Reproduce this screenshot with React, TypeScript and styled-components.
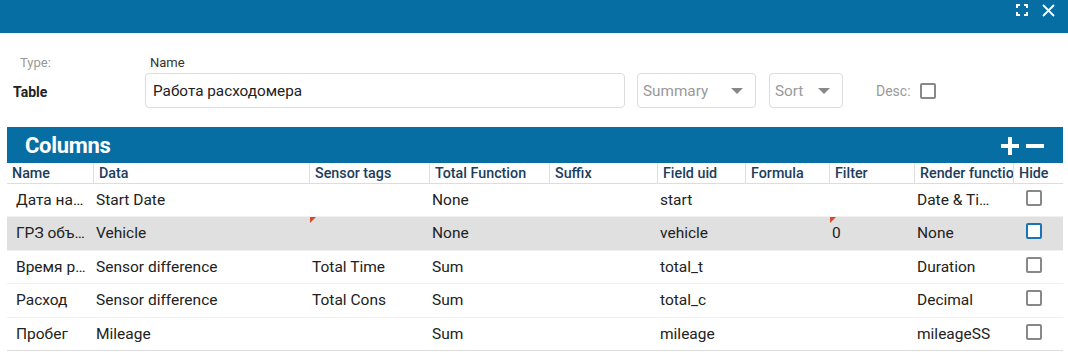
import React from 'react';
import styled, { createGlobalStyle } from 'styled-components';

const GlobalStyle = createGlobalStyle`
  body {
    margin: 0;
    background: #fff;
    font-family: Roboto, "Noto Sans", Arial, sans-serif;
    color: #222;
  }
`;

const BLUE = '#076ea3';

const TopBar = styled.div`
  height: 33px;
  background: ${BLUE};
  display: flex;
  justify-content: flex-end;
  align-items: flex-start;
  gap: 12px;
  padding: 3px 13px 0 0;
  box-sizing: border-box;
`;

const IconButton = styled.span`
  display: flex;
  width: 14px;
  height: 14px;
  align-items: center;
  justify-content: center;
`;

const Form = styled.div`
  display: flex;
  align-items: flex-end;
  padding: 22px 0 19px 13px;
`;

const Field = styled.div<{ $width: number; $mr?: number }>`
  display: flex;
  flex-direction: column;
  width: ${(p) => p.$width}px;
  margin-right: ${(p) => p.$mr ?? 0}px;
`;

const Label = styled.div<{ $muted?: boolean; $indent?: number }>`
  font-size: 13px;
  height: 18px;
  color: ${(p) => (p.$muted ? '#999' : '#333')};
  padding-left: ${(p) => p.$indent ?? 0}px;
`;

const Control = styled.div`
  height: 35px;
  display: flex;
  align-items: center;
  padding-top: 2px;
  box-sizing: border-box;
`;

const TypeValue = styled.div`
  font-size: 14px;
  font-weight: 700;
  color: #222;
`;

const TextInput = styled.div`
  width: 100%;
  height: 35px;
  border: 1px solid #dcdcdc;
  border-radius: 4px;
  box-sizing: border-box;
  display: flex;
  align-items: center;
  padding-left: 7px;
  font-size: 15.3px;
  color: #222;
`;

const Select = styled.div`
  width: 100%;
  height: 35px;
  border: 1px solid #dcdcdc;
  border-radius: 4px;
  box-sizing: border-box;
  display: flex;
  align-items: center;
  justify-content: space-between;
  padding: 0 12px 0 5px;
  font-size: 15.3px;
  color: #999;
`;

const Caret = styled.span`
  width: 0;
  height: 0;
  border-left: 6px solid transparent;
  border-right: 6px solid transparent;
  border-top: 6px solid #888;
`;

const DescBox = styled.div`
  display: flex;
  align-items: center;
  height: 35px;
  gap: 9px;
  font-size: 14px;
  color: #999;
`;

const Checkbox = styled.span<{ $active?: boolean }>`
  display: inline-block;
  width: 16px;
  height: 16px;
  box-sizing: border-box;
  border: 2px solid ${(p) => (p.$active ? '#1a73b5' : '#888')};
  border-radius: 2px;
  background: #fff;
`;

const Panel = styled.div`
  margin: 0 5px 0 7px;
`;

const PanelHeader = styled.div`
  height: 36px;
  background: ${BLUE};
  display: flex;
  justify-content: space-between;
  align-items: flex-end;
  padding: 0 19px 0 18px;
`;

const PanelTitle = styled.div`
  color: #fff;
  font-size: 22px;
  font-weight: 700;
  align-self: center;
  letter-spacing: -0.3px;
`;

const PanelActions = styled.div`
  display: flex;
  gap: 7px;
  padding-bottom: 8px;
`;

const COLS = '86px 216px 120px 120px 108px 88px 84px 85px 99px 50px';

const HeadRow = styled.div`
  display: grid;
  grid-template-columns: ${COLS};
  height: 20px;
  border-bottom: 1px solid #ddd;
`;

const HeadCell = styled.div`
  font-size: 14.3px;
  font-weight: 500;
  color: #1c3d5e;
  padding-left: 5px;
  line-height: 20px;
  white-space: nowrap;
  overflow: hidden;
  border-left: 1px solid #ddd;
  &:first-child {
    border-left: none;
  }
`;

const Row = styled.div<{ $selected?: boolean; $last?: boolean }>`
  display: grid;
  grid-template-columns: ${COLS};
  height: 33.4px;
  box-sizing: border-box;
  background: ${(p) => (p.$selected ? '#e0e0e0' : '#fff')};
  border-bottom: 1px solid ${(p) => (p.$last ? '#ddd' : '#f0f0f0')};
`;

const Cell = styled.div<{ $padRight?: number }>`
  position: relative;
  font-size: 15.5px;
  color: #222;
  padding: 0 ${(p) => p.$padRight ?? 3}px 0 3px;
  line-height: 32px;
  white-space: nowrap;
  overflow: hidden;
  text-overflow: ellipsis;
  &:first-child {
    padding-left: 9px;
  }
`;

const CheckCell = styled.div`
  display: flex;
  align-items: flex-start;
  padding: 6px 0 0 13px;
`;

const DirtyMark = styled.span`
  position: absolute;
  top: 0;
  left: 1px;
  width: 0;
  height: 0;
  border-top: 6px solid #d9472b;
  border-right: 6px solid transparent;
`;

type Column = {
  name: string;
  data: string;
  tags: string;
  total: string;
  suffix: string;
  uid: string;
  formula: string;
  filter: string;
  render: string;
  dirty?: boolean;
};

const columns: Column[] = [
  { name: 'Дата начала', data: 'Start Date', tags: '', total: 'None', suffix: '', uid: 'start', formula: '', filter: '', render: 'Date & Time' },
  { name: 'ГРЗ объекта', data: 'Vehicle', tags: '', total: 'None', suffix: '', uid: 'vehicle', formula: '', filter: '0', render: 'None', dirty: true },
  { name: 'Время работы', data: 'Sensor difference', tags: 'Total Time', total: 'Sum', suffix: '', uid: 'total_t', formula: '', filter: '', render: 'Duration' },
  { name: 'Расход', data: 'Sensor difference', tags: 'Total Cons', total: 'Sum', suffix: '', uid: 'total_c', formula: '', filter: '', render: 'Decimal' },
  { name: 'Пробег', data: 'Mileage', tags: '', total: 'Sum', suffix: '', uid: 'mileage', formula: '', filter: '', render: 'mileageSS' },
];

const headers = ['Name', 'Data', 'Sensor tags', 'Total Function', 'Suffix', 'Field uid', 'Formula', 'Filter', 'Render function', 'Hide'];

export default function App() {
  return (
    <>
      <GlobalStyle />
      <TopBar>
        <IconButton>
          <svg width="12" height="12" viewBox="0 0 12 12" fill="none" stroke="#fff" strokeWidth="2">
            <path d="M1 4V1h3M8 1h3v3M11 8v3H8M4 11H1V8" />
          </svg>
        </IconButton>
        <IconButton>
          <svg width="13" height="13" viewBox="0 0 13 13" stroke="#fff" strokeWidth="1.8">
            <path d="M1 1l11 11M12 1L1 12" />
          </svg>
        </IconButton>
      </TopBar>
      <Form>
        <Field $width={132}>
          <Label $muted $indent={7}>Type:</Label>
          <Control>
            <TypeValue>Table</TypeValue>
          </Control>
        </Field>
        <Field $width={480} $mr={12}>
          <Label $indent={5}>Name</Label>
          <TextInput>Работа расходомера</TextInput>
        </Field>
        <Field $width={119} $mr={13}>
          <Select>
            Summary
            <Caret />
          </Select>
        </Field>
        <Field $width={74} $mr={33}>
          <Select>
            Sort
            <Caret />
          </Select>
        </Field>
        <Field $width={80}>
          <DescBox>
            Desc:
            <Checkbox />
          </DescBox>
        </Field>
      </Form>
      <Panel>
        <PanelHeader>
          <PanelTitle>Columns</PanelTitle>
          <PanelActions>
            <svg width="18" height="18" viewBox="0 0 18 18" fill="#fff">
              <rect x="7" y="0" width="4" height="18" />
              <rect x="0" y="7" width="18" height="4" />
            </svg>
            <svg width="18" height="18" viewBox="0 0 18 18" fill="#fff">
              <rect x="0" y="7" width="18" height="4" />
            </svg>
          </PanelActions>
        </PanelHeader>
        <HeadRow>
          {headers.map((h) => (
            <HeadCell key={h}>{h}</HeadCell>
          ))}
        </HeadRow>
        {columns.map((c, i) => (
          <Row key={c.uid} $selected={c.dirty} $last={i === columns.length - 1}>
            <Cell>{c.name}</Cell>
            <Cell>{c.data}</Cell>
            <Cell>
              {c.dirty && <DirtyMark />}
              {c.tags}
            </Cell>
            <Cell>{c.total}</Cell>
            <Cell>{c.suffix}</Cell>
            <Cell>{c.uid}</Cell>
            <Cell>{c.formula}</Cell>
            <Cell>
              {c.dirty && <DirtyMark />}
              {c.filter}
            </Cell>
            <Cell $padRight={20}>{c.render}</Cell>
            <CheckCell>
              <Checkbox $active={c.dirty} />
            </CheckCell>
          </Row>
        ))}
      </Panel>
    </>
  );
}
